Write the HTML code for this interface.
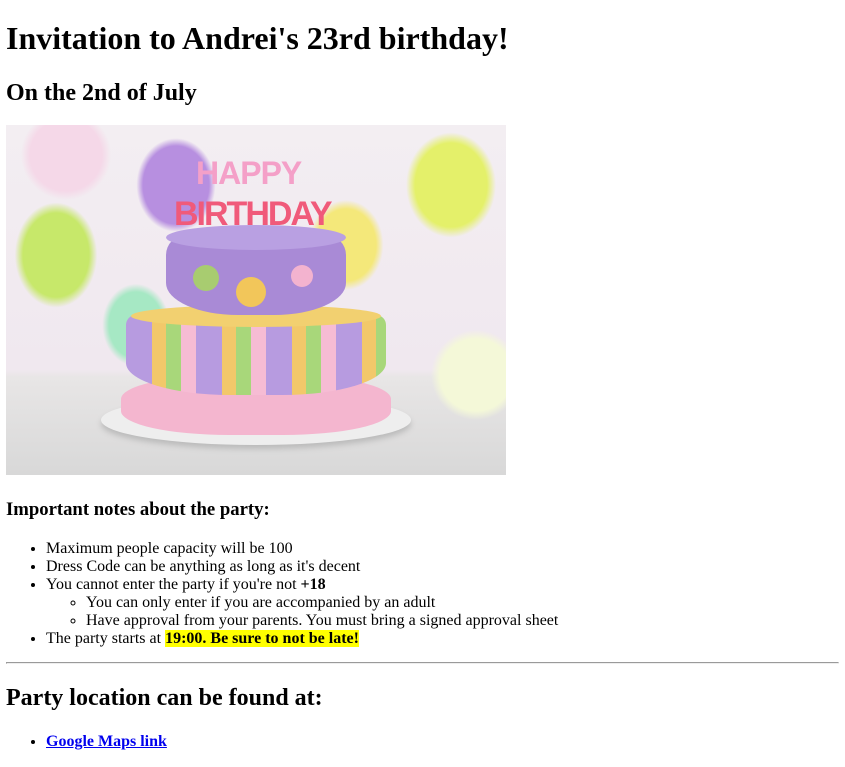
<!DOCTYPE html>
<html><head><meta charset="utf-8"><style>
body{margin:6px;font-family:"Liberation Serif",serif;font-size:16px;color:#000;background:#fff}
h1{font-size:32px;margin:20px 0 21px}
h2{font-size:24px;margin:20px 0}
h2.d{margin:23px 0 18px}
h3{font-size:18.7px;margin:24px 0 19px}
ul.m{margin-bottom:14px}
hr{margin-top:0}
h2.l{margin:21px 0 21px}
.img{width:500px;height:350px;position:relative;overflow:hidden;
background:
radial-gradient(ellipse 55px 65px at 170px 60px,#b78fe0 60%,transparent 72%),
radial-gradient(ellipse 60px 70px at 445px 60px,#e4f06a 60%,transparent 75%),
radial-gradient(ellipse 55px 70px at 50px 130px,#c7e86a 60%,transparent 75%),
radial-gradient(ellipse 50px 60px at 340px 120px,#f4e87a 60%,transparent 75%),
radial-gradient(ellipse 45px 55px at 130px 200px,#a6e8c4 60%,transparent 75%),
radial-gradient(ellipse 60px 60px at 60px 30px,#f5d8e8 60%,transparent 75%),
radial-gradient(ellipse 60px 60px at 470px 250px,#f4f8d8 60%,transparent 75%),
linear-gradient(#f3eef2,#f0e8ef 70%,#e8e6e6 72%,#d8d8d8);}
.s{position:absolute}
</style></head><body>
<h1>Invitation to Andrei's 23rd birthday!</h1>
<h2 class="d">On the 2nd of July</h2>
<div class="img">
 <div class="s" style="left:95px;top:270px;width:310px;height:50px;border-radius:50%;background:#eee;box-shadow:0 4px 6px #bbb"></div>
 <div class="s" style="left:115px;top:250px;width:270px;height:60px;border-radius:40%;background:#f4b6cf"></div>
 <div class="s" style="left:120px;top:190px;width:260px;height:80px;border-radius:10px 10px 40% 40%;background:repeating-linear-gradient(90deg,#b79be0 0 26px,#f2c86a 26px 40px,#a8d77a 40px 55px,#f6bcd4 55px 70px)"></div>
 <div class="s" style="left:125px;top:180px;width:250px;height:22px;border-radius:50%;background:#f2d070"></div>
 <div class="s" style="left:160px;top:110px;width:180px;height:80px;border-radius:20px 20px 40% 40%;background:#a98ad6"></div>
 <div class="s" style="left:160px;top:100px;width:180px;height:25px;border-radius:50%;background:#b9a0e2"></div>
 <div class="s" style="left:187px;top:140px;width:26px;height:26px;border-radius:50%;background:#a8cc70"></div>
 <div class="s" style="left:230px;top:152px;width:30px;height:30px;border-radius:50%;background:#f2c65a"></div>
 <div class="s" style="left:285px;top:140px;width:22px;height:22px;border-radius:50%;background:#f3b3cf"></div>
 <div class="s" style="left:168px;top:70px;font:bold 34px 'Liberation Sans',sans-serif;color:#f05a7a;letter-spacing:-2px">BIRTHDAY</div>
 <div class="s" style="left:190px;top:30px;font:bold 32px 'Liberation Sans',sans-serif;color:#f4a0c8;letter-spacing:-1px">HAPPY</div>
</div>
<h3>Important notes about the party:</h3>
<ul class="m">
<li>Maximum people capacity will be 100</li>
<li>Dress Code can be anything as long as it's decent</li>
<li>You cannot enter the party if you're not <b>+18</b>
<ul><li>You can only enter if you are accompanied by an adult</li>
<li>Have approval from your parents. You must bring a signed approval sheet</li></ul></li>
<li>The party starts at <mark><b>19:00. Be sure to not be late!</b></mark></li>
</ul>
<hr>
<h2 class="l">Party location can be found at:</h2>
<ul><li><a href="#" style="color:#00e;font-weight:bold">Google Maps link</a></li></ul>
</body></html>
